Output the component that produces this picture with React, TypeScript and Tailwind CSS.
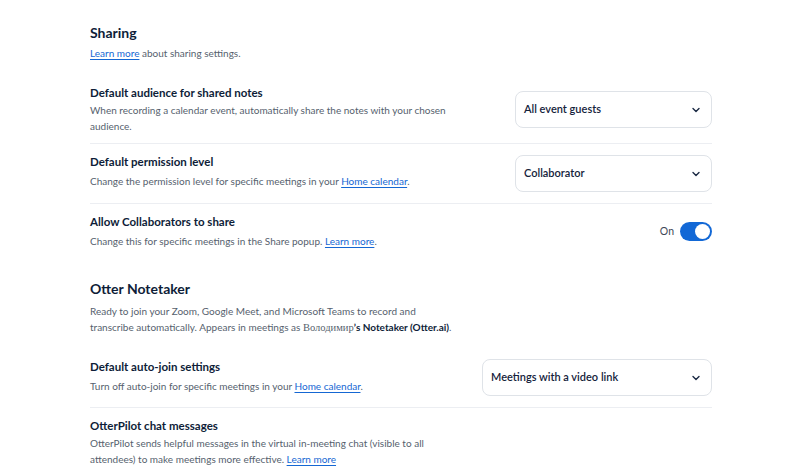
import React from 'react';

const font = { fontFamily: 'Lato, "Open Sans", "Liberation Sans", sans-serif' };

const Chevron = () => (
  <svg width="10" height="10" viewBox="0 0 10 10" fill="none" className="text-[#1b2a44]">
    <path d="M2 3.5 L5 6.5 L8 3.5" stroke="currentColor" strokeWidth="1.4" strokeLinecap="round" strokeLinejoin="round" />
  </svg>
);

const Select = ({ value, width }: { value: string; width: string }) => (
  <div className={`${width} h-[37px] rounded-lg border border-[#dfe3e8] bg-white flex items-center justify-between pl-[8px] pr-[10px]`}>
    <span className="text-[11px] font-semibold text-[#14223b]">{value}</span>
    <Chevron />
  </div>
);

const Link = ({ children }: { children: React.ReactNode }) => (
  <a className="text-[#1567d3] underline underline-offset-2 cursor-pointer">{children}</a>
);

const Title = ({ children }: { children: React.ReactNode }) => (
  <div className="text-[11.5px] font-bold text-[#0e1d38] leading-[16px]">{children}</div>
);

const Desc = ({ children, tight = false }: { children: React.ReactNode; tight?: boolean }) => (
  <p className={`${tight ? 'mt-[1px]' : 'mt-[3px]'} text-[10px] text-[#565f6e] leading-[16px]`}>{children}</p>
);

export default function App() {
  return (
    <div className="w-[800px] h-[473px] bg-white overflow-hidden" style={font}>
      <div className="ml-[90px] w-[622px] pt-[23px]">
        {/* Sharing */}
        <h2 className="text-[14px] font-bold text-[#0e1d38] leading-[20px]">Sharing</h2>
        <p className="mt-[2px] text-[10px] text-[#565f6e] leading-[16px]">
          <Link>Learn more</Link> about sharing settings.
        </p>

        <div className="mt-[24px] flex items-start justify-between pb-[9px] border-b border-[#eceef2]">
          <div>
            <Title>Default audience for shared notes</Title>
            <Desc tight>
              When recording a calendar event, automatically share the notes with your chosen
              <br />
              audience.
            </Desc>
          </div>
          <div className="mt-[6px]">
            <Select value="All event guests" width="w-[197px]" />
          </div>
        </div>

        <div className="pt-[10px] flex items-start justify-between pb-[11px] border-b border-[#eceef2]">
          <div>
            <Title>Default permission level</Title>
            <Desc>
              Change the permission level for specific meetings in your <Link>Home calendar</Link>.
            </Desc>
          </div>
          <div className="mt-[1px]">
            <Select value="Collaborator" width="w-[197px]" />
          </div>
        </div>

        <div className="pt-[10px] flex items-start justify-between">
          <div>
            <Title>Allow Collaborators to share</Title>
            <Desc>
              Change this for specific meetings in the Share popup. <Link>Learn more</Link>.
            </Desc>
          </div>
          <div className="flex items-center gap-[6px] mt-[8px]">
            <span className="text-[10.5px] text-[#3d4656]">On</span>
            <div className="w-[32px] h-[19px] rounded-full bg-[#1268d6] flex items-center justify-end pr-[2px]">
              <div className="w-[15px] h-[15px] rounded-full bg-white" />
            </div>
          </div>
        </div>

        {/* Otter Notetaker */}
        <h2 className="mt-[30px] text-[14px] font-bold text-[#0e1d38] leading-[20px]">Otter Notetaker</h2>
        <p className="mt-[4px] text-[10px] text-[#565f6e] leading-[16px]">
          Ready to join your Zoom, Google Meet, and Microsoft Teams to record and
          <br />
          transcribe automatically. Appears in meetings as{' '}
          <span style={{ fontFamily: '"Liberation Serif", "DejaVu Serif", serif' }} className="text-[10.5px]">Володимир</span>
          <span className="font-bold text-[#0e1d38]">’s Notetaker (Otter.ai)</span>.
        </p>

        <div className="mt-[23px] flex items-start justify-between pb-[11px] border-b border-[#eceef2]">
          <div>
            <Title>Default auto-join settings</Title>
            <Desc>
              Turn off auto-join for specific meetings in your <Link>Home calendar</Link>.
            </Desc>
          </div>
          <Select value="Meetings with a video link" width="w-[230px]" />
        </div>

        <div className="pt-[10px]">
          <Title>OtterPilot chat messages</Title>
          <Desc tight>
            OtterPilot sends helpful messages in the virtual in-meeting chat (visible to all
            <br />
            attendees) to make meetings more effective. <Link>Learn more</Link>
          </Desc>
        </div>
      </div>
    </div>
  );
}
